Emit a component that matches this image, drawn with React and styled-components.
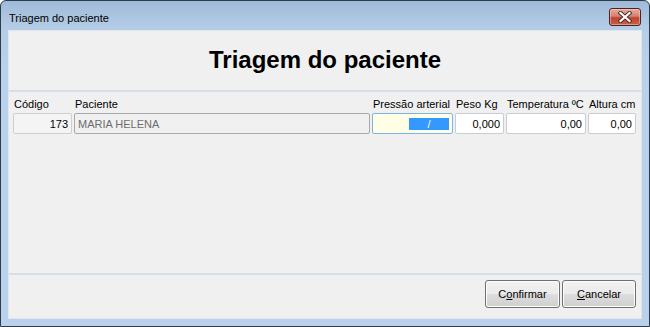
import React from "react";
import styled, { createGlobalStyle } from "styled-components";

const Global = createGlobalStyle`
  html, body { margin: 0; padding: 0; background: #ffffff; }
  body { font-family: "Liberation Sans", Arial, sans-serif; }
`;

const Window = styled.div`
  box-sizing: border-box;
  width: 650px;
  height: 327px;
  border: 1px solid #2e3b48;
  border-radius: 6px 6px 0 0;
  background: linear-gradient(180deg, #9fbad8 0px, #b4cce6 26px, #b9d1ea 60px, #b9d1ea 100%);
  display: flex;
  flex-direction: column;
  padding: 0 7px 7px 7px;
`;

const TitleBar = styled.div`
  height: 29px;
  display: flex;
  align-items: center;
  justify-content: space-between;
  padding-left: 1px;
`;

const TitleText = styled.span`
  font-size: 11px;
  color: #000;
  margin-top: 4px;
`;

const CloseButton = styled.div`
  box-sizing: border-box;
  width: 32px;
  height: 18px;
  margin-top: 2px;
  margin-right: 1px;
  border: 1px solid #4a2420;
  border-radius: 3px;
  background: linear-gradient(180deg, #e6ab9f 0%, #d5806e 45%, #c0432e 55%, #c95f47 100%);
  box-shadow: inset 0 0 0 1px rgba(255, 220, 210, 0.45);
  display: flex;
  align-items: center;
  justify-content: center;
`;

const Client = styled.div`
  flex: 1;
  box-sizing: border-box;
  background: #f0f0f0;
  border: 1px solid #dfe6ee;
  display: flex;
  flex-direction: column;
`;

const Header = styled.div`
  height: 59px;
  display: flex;
  align-items: center;
  justify-content: center;
  border-bottom: 2px solid #d6dfe8;
`;

const Heading = styled.h1`
  margin: 0;
  font-family: "Liberation Sans", Arial, sans-serif;
  font-weight: bold;
  font-size: 24px;
  color: #000;
  padding-bottom: 1px;
`;

const Fields = styled.div`
  flex: 1;
  display: flex;
  gap: 2px;
  padding: 5px 4px 0 4px;
  align-items: flex-start;
`;

const Field = styled.div`
  display: flex;
  flex-direction: column;
  width: ${(p) => p.$w}px;
  flex: none;
`;

const Label = styled.label`
  font-size: 11px;
  color: #000;
  height: 14px;
  line-height: 14px;
  padding-left: 1px;
  white-space: nowrap;
`;

const variants = {
  disabled: { bg: "#f4f4f4", border: "#cfcfcf", color: "#000" },
  readonly: { bg: "#f0f0f0", border: "#a9a9a9", color: "#6d6d6d" },
  focus: { bg: "#ffffe6", border: "#7fb4e8", color: "#000" },
  normal: { bg: "#ffffff", border: "#c9ccd2", color: "#000" },
};

const Input = styled.div`
  box-sizing: border-box;
  height: 21px;
  margin-top: 2px;
  border: 1px solid ${(p) => variants[p.$v].border};
  border-radius: 2px;
  background: ${(p) => variants[p.$v].bg};
  color: ${(p) => variants[p.$v].color};
  font-size: 11px;
  display: flex;
  align-items: center;
  justify-content: ${(p) => (p.$right ? "flex-end" : "flex-start")};
  padding: 0 3px;
  white-space: nowrap;
  overflow: hidden;
`;

const Selection = styled.span`
  background: #3399ff;
  color: #fff;
  width: 40px;
  height: 12px;
  display: flex;
  align-items: center;
  justify-content: center;
  font-size: 11px;
`;

const Footer = styled.div`
  height: 38px;
  border-top: 2px solid #d6dfe8;
  display: flex;
  justify-content: flex-end;
  align-items: flex-start;
  gap: 2px;
  padding: 5px 5px 0 0;
`;

const Button = styled.button`
  box-sizing: border-box;
  width: ${(p) => p.$w}px;
  height: 28px;
  border: 1px solid #707070;
  border-radius: 3px;
  background: linear-gradient(180deg, #f2f2f2 0%, #ebebeb 48%, #dddddd 52%, #cfcfcf 100%);
  box-shadow: inset 0 0 0 1px #fcfcfc;
  font-family: "Liberation Sans", Arial, sans-serif;
  font-size: 11px;
  color: #000;
  padding: 0;
  u { text-decoration: underline; }
`;

export default function App() {
  return (
    <>
      <Global />
      <Window>
        <TitleBar>
          <TitleText>Triagem do paciente</TitleText>
          <CloseButton>
            <svg width="14" height="12" viewBox="0 0 14 12">
              <path
                d="M2.5 2 L11.5 10 M11.5 2 L2.5 10"
                stroke="#4a2a28"
                strokeWidth="4"
                strokeLinecap="square"
              />
              <path
                d="M2.5 2 L11.5 10 M11.5 2 L2.5 10"
                stroke="#ffffff"
                strokeWidth="2.2"
                strokeLinecap="square"
              />
            </svg>
          </CloseButton>
        </TitleBar>
        <Client>
          <Header>
            <Heading>Triagem do paciente</Heading>
          </Header>
          <Fields>
            <Field $w={59}>
              <Label>Código</Label>
              <Input $v="disabled" $right>173</Input>
            </Field>
            <Field $w={296}>
              <Label>Paciente</Label>
              <Input $v="readonly">MARIA HELENA</Input>
            </Field>
            <Field $w={81}>
              <Label>Pressão arterial</Label>
              <Input $v="focus" $right>
                <Selection>/</Selection>
              </Input>
            </Field>
            <Field $w={49}>
              <Label>Peso Kg</Label>
              <Input $v="normal" $right>0,000</Input>
            </Field>
            <Field $w={80}>
              <Label>Temperatura ºC</Label>
              <Input $v="normal" $right>0,00</Input>
            </Field>
            <Field $w={48}>
              <Label>Altura cm</Label>
              <Input $v="normal" $right>0,00</Input>
            </Field>
          </Fields>
          <Footer>
            <Button $w={75}>
              C<u>o</u>nfirmar
            </Button>
            <Button $w={74}>
              <u>C</u>ancelar
            </Button>
          </Footer>
        </Client>
      </Window>
    </>
  );
}
